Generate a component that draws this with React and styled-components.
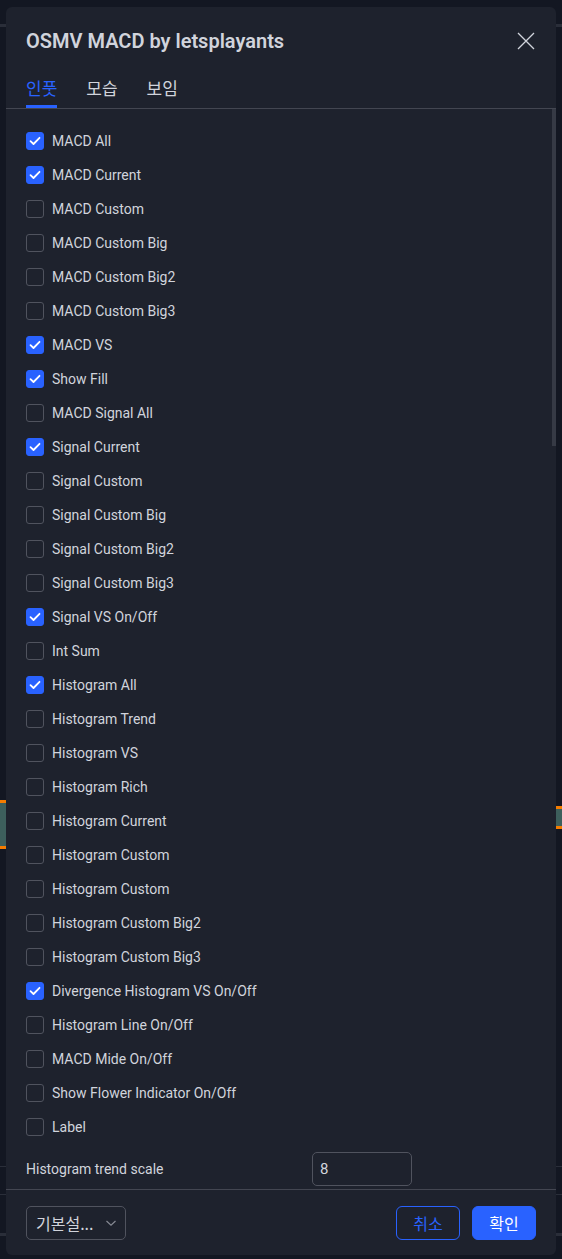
import React from "react";
import styled, { createGlobalStyle } from "styled-components";

const GlobalStyle = createGlobalStyle`
  html, body {
    margin: 0;
    padding: 0;
    background: #131722;
  }
  body {
    font-family: Roboto, "Noto Sans", "Noto Sans CJK KR", sans-serif;
    color: #d1d4dc;
  }
`;

// chart that shows behind the dialog
const Backdrop = styled.div`
  position: relative;
  width: 562px;
  height: 1259px;
  overflow: hidden;
  background:
    linear-gradient(#2a2e39, #2a2e39) 0 24px / 100% 3px no-repeat,
    linear-gradient(#2a2e39, #2a2e39) 0 1166px / 100% 1px no-repeat,
    linear-gradient(#2a2e39, #2a2e39) 0 1194px / 100% 1px no-repeat,
    linear-gradient(#2a2e39, #2a2e39) 0 1233px / 100% 3px no-repeat,
    #131722;
`;

const Candle = styled.div`
  position: absolute;
  top: ${(p) => p.top}px;
  left: ${(p) => p.left}px;
  width: 6px;
  height: ${(p) => p.h}px;
  background: #3d5f5c;
  border-top: 3px solid #f57c00;
  border-bottom: 3px solid #f57c00;
`;

const Dialog = styled.div`
  position: absolute;
  top: 7px;
  left: 6px;
  width: 550px;
  height: 1248px;
  background: #1e222d;
  border-radius: 6px;
  display: flex;
  flex-direction: column;
  overflow: hidden;
`;

const Header = styled.div`
  display: flex;
  align-items: center;
  justify-content: space-between;
  padding: 15px 20px 0 20px;
  height: 38px;
`;

const Title = styled.h2`
  margin: 0;
  font-size: 20px;
  font-weight: 600;
  color: #d1d4dc;
`;

const CloseButton = styled.button`
  width: 24px;
  height: 24px;
  margin-right: -2px;
  padding: 0;
  border: 0;
  background: none;
  display: flex;
  align-items: center;
  justify-content: center;
  color: #d1d4dc;
`;

const Tabs = styled.div`
  display: flex;
  gap: 29px;
  padding: 0 20px;
  margin-top: 7px;
  border-bottom: 1px solid #434651;
`;

const Tab = styled.div`
  height: 40px;
  display: flex;
  align-items: center;
  font-family: "Noto Sans CJK KR", sans-serif;
  font-size: 17px;
  color: ${(p) => (p.active ? "#2962ff" : "#d1d4dc")};
  box-shadow: ${(p) => (p.active ? "inset 0 -3px 0 #2962ff" : "none")};
  padding-bottom: 1px;
`;

const BodyWrap = styled.div`
  position: relative;
  flex: 1;
  min-height: 0;
`;

const Body = styled.div`
  height: 100%;
  box-sizing: border-box;
  overflow: hidden;
  padding: 15px 20px 0 20px;
`;

const ScrollThumb = styled.div`
  position: absolute;
  top: 0;
  right: 0;
  width: 4px;
  height: 337px;
  background: #363a45;
`;

const CheckRow = styled.label`
  height: 34px;
  display: flex;
  align-items: center;
  gap: 8px;
  font-size: 14px;
  color: #d1d4dc;
`;

const Box = styled.span`
  width: 18px;
  height: 18px;
  box-sizing: border-box;
  border-radius: 3px;
  border: 1px solid ${(p) => (p.checked ? "#2962ff" : "#50535e")};
  background: ${(p) => (p.checked ? "#2962ff" : "transparent")};
  display: flex;
  align-items: center;
  justify-content: center;
  flex-shrink: 0;
`;

const FieldRow = styled.div`
  display: flex;
  align-items: center;
  height: 34px;
  margin-top: 8px;
  font-size: 14px;
`;

const FieldLabel = styled.span`
  width: 286px;
`;

const NumberInput = styled.div`
  width: 100px;
  height: 34px;
  box-sizing: border-box;
  border: 1px solid #50535e;
  border-radius: 5px;
  display: flex;
  align-items: center;
  padding-left: 7px;
  font-size: 15px;
  color: #d1d4dc;
`;

const Footer = styled.div`
  border-top: 1px solid #434651;
  display: flex;
  align-items: center;
  justify-content: space-between;
  padding: 16px 20px 15px 20px;
`;

const Preset = styled.div`
  width: 100px;
  height: 34px;
  box-sizing: border-box;
  border: 1px solid #50535e;
  border-radius: 5px;
  display: flex;
  align-items: center;
  justify-content: space-between;
  padding: 0 8px 0 9px;
  font-family: "Noto Sans CJK KR", sans-serif;
  font-size: 16px;
  color: #d1d4dc;
`;

const Actions = styled.div`
  display: flex;
  gap: 12px;
`;

const Button = styled.button`
  width: 64px;
  height: 34px;
  box-sizing: border-box;
  border-radius: 6px;
  font-family: "Noto Sans CJK KR", sans-serif;
  font-size: 16px;
  border: 1px solid #2962ff;
  background: ${(p) => (p.primary ? "#2962ff" : "transparent")};
  color: ${(p) => (p.primary ? "#ffffff" : "#2962ff")};
  padding: 0;
`;

const CHECKS = [
  ["MACD All", true],
  ["MACD Current", true],
  ["MACD Custom", false],
  ["MACD Custom Big", false],
  ["MACD Custom Big2", false],
  ["MACD Custom Big3", false],
  ["MACD VS", true],
  ["Show Fill", true],
  ["MACD Signal All", false],
  ["Signal Current", true],
  ["Signal Custom", false],
  ["Signal Custom Big", false],
  ["Signal Custom Big2", false],
  ["Signal Custom Big3", false],
  ["Signal VS On/Off", true],
  ["Int Sum", false],
  ["Histogram All", true],
  ["Histogram Trend", false],
  ["Histogram VS", false],
  ["Histogram Rich", false],
  ["Histogram Current", false],
  ["Histogram Custom", false],
  ["Histogram Custom", false],
  ["Histogram Custom Big2", false],
  ["Histogram Custom Big3", false],
  ["Divergence Histogram VS On/Off", true],
  ["Histogram Line On/Off", false],
  ["MACD Mide On/Off", false],
  ["Show Flower Indicator On/Off", false],
  ["Label", false],
];

function Check({ checked }) {
  return (
    <Box checked={checked}>
      {checked && (
        <svg width="12" height="10" viewBox="0 0 12 10" fill="none">
          <path d="M1.5 5.2 4.5 8 10.5 1.8" stroke="#fff" strokeWidth="1.8" strokeLinecap="round" strokeLinejoin="round" />
        </svg>
      )}
    </Box>
  );
}

export default function App() {
  return (
    <Backdrop>
      <GlobalStyle />
      <Candle left={0} top={800} h={43} />
      <Candle left={556} top={806} h={17} />
      <Dialog>
        <Header>
          <Title>OSMV MACD by letsplayants</Title>
          <CloseButton aria-label="닫기">
            <svg width="18" height="18" viewBox="0 0 18 18" fill="none">
              <path d="M1 1l16 16M17 1 1 17" stroke="currentColor" strokeWidth="1.3" />
            </svg>
          </CloseButton>
        </Header>
        <Tabs>
          <Tab active>인풋</Tab>
          <Tab>모습</Tab>
          <Tab>보임</Tab>
        </Tabs>
        <BodyWrap>
          <Body>
            {CHECKS.map(([label, checked], i) => (
              <CheckRow key={i}>
                <Check checked={checked} />
                {label}
              </CheckRow>
            ))}
            <FieldRow>
              <FieldLabel>Histogram trend scale</FieldLabel>
              <NumberInput>8</NumberInput>
            </FieldRow>
          </Body>
          <ScrollThumb />
        </BodyWrap>
        <Footer>
          <Preset>
            기본설...
            <svg width="12" height="8" viewBox="0 0 12 8" fill="none">
              <path d="M1.5 2 6 6.2 10.5 2" stroke="#868993" strokeWidth="1.2" />
            </svg>
          </Preset>
          <Actions>
            <Button>취소</Button>
            <Button primary>확인</Button>
          </Actions>
        </Footer>
      </Dialog>
    </Backdrop>
  );
}
